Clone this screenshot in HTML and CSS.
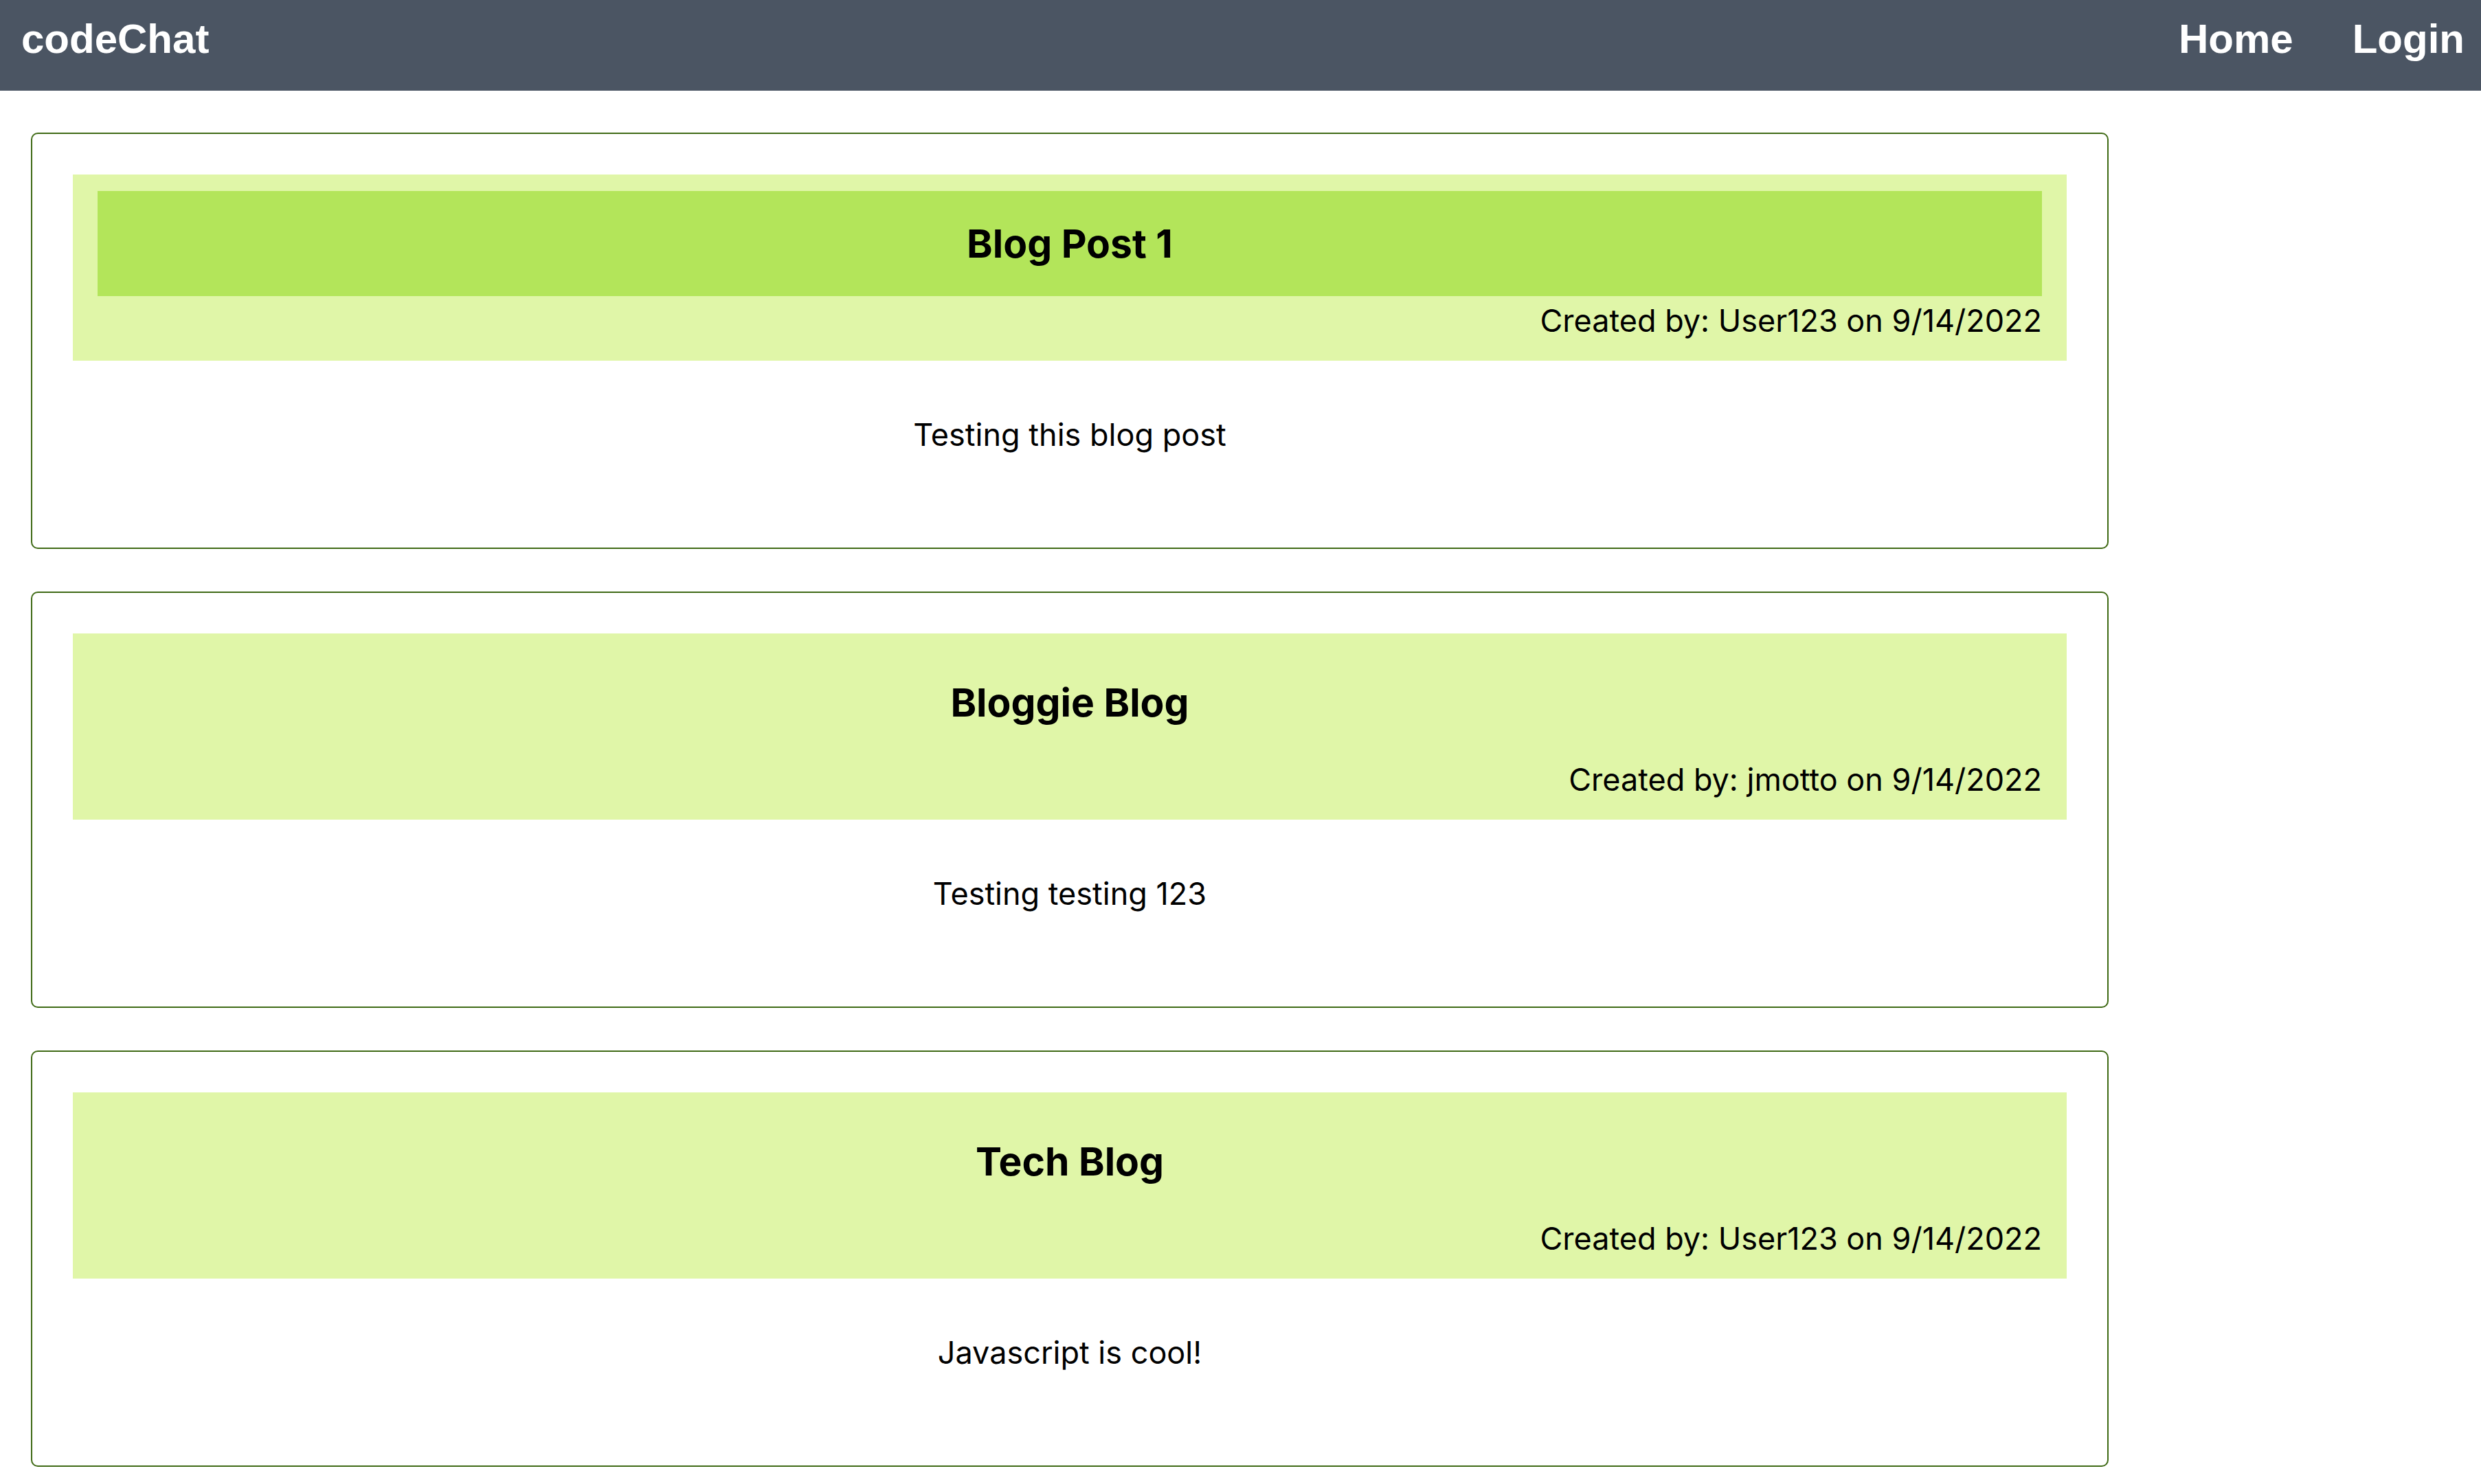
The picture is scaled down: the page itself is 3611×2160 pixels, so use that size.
FILE: index.html
```html
<!DOCTYPE html>
<html lang="en">
<head>
<meta charset="utf-8">
<title>codeChat</title>
<link rel="stylesheet" href="styles.css">
</head>
<body>
<header class="topbar">
  <a class="brand" href="#">codeChat</a>
  <nav class="nav">
    <a class="nav-link" href="#">Home</a>
    <a class="nav-link" href="#">Login</a>
  </nav>
</header>
<main class="feed">
  <article class="post">
    <div class="post-head">
      <h2 class="post-title is-active">Blog Post 1</h2>
      <p class="post-meta">Created by: User123 on 9/14/2022</p>
    </div>
    <p class="post-body">Testing this blog post</p>
  </article>
  <article class="post">
    <div class="post-head">
      <h2 class="post-title">Bloggie Blog</h2>
      <p class="post-meta">Created by: jmotto on 9/14/2022</p>
    </div>
    <p class="post-body">Testing testing 123</p>
  </article>
  <article class="post">
    <div class="post-head">
      <h2 class="post-title">Tech Blog</h2>
      <p class="post-meta">Created by: User123 on 9/14/2022</p>
    </div>
    <p class="post-body">Javascript is cool!</p>
  </article>
</main>
</body>
</html>
```
FILE: styles.css
```css
* { box-sizing: border-box; }

body {
  margin: 0;
  background: #ffffff;
  color: #000000;
  font-family: Inter, "Noto Sans", "Liberation Sans", sans-serif;
}

.topbar {
  height: 132px;
  background: #4b5563;
  display: flex;
  justify-content: space-between;
  align-items: flex-start;
  padding: 21px 24px 0 31px;
}

.brand,
.nav-link {
  font-family: "Liberation Sans", Arial, sans-serif;
  font-weight: 700;
  font-size: 60px;
  line-height: 72px;
  color: #ffffff;
  text-decoration: none;
}

.nav {
  display: flex;
  gap: 86px;
}

.feed {
  display: flex;
  flex-direction: column;
  gap: 62px;
  padding: 61px 0 0 45px;
}

.post {
  width: 3024px;
  border: 2px solid #3f6a15;
  border-radius: 10px;
  padding: 59px;
}

.post-head {
  background: #e0f6a8;
  padding: 24px 36px 28px;
}

.post-title {
  margin: 0;
  padding: 40px 0;
  font-size: 57px;
  font-weight: 700;
  line-height: 73px;
  text-align: center;
}

.post-title.is-active {
  background: #b3e55a;
}

.post-meta {
  margin: 6px 0 0;
  font-size: 45px;
  line-height: 60px;
  text-align: right;
}

.post-body {
  margin: 78px 0 75px;
  font-size: 45px;
  line-height: 60px;
  text-align: center;
}
```
